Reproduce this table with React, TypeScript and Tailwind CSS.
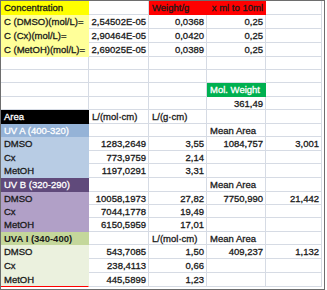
import React from "react";

type CellDef = {
  t?: string;
  right?: boolean;
  fill?: string;
  bold?: boolean;
};

const W = ["w-[88px]", "w-[60px]", "w-[58px]", "w-[59px]", "w-[56px]"];

const Y = "bg-[#ffff00] border-transparent text-[#1a1a1a]";
const PY = "bg-[#ffff99] border-transparent text-[#1a1a1a]";
const RED = "bg-[#ff0000] border-transparent text-[#1a1a1a]";
const GREEN = "bg-[#00b050] border-transparent text-white";
const BLACK = "bg-black border-transparent text-white";
const BLUEH = "bg-[#95b3d7] border-transparent text-white";
const BLUE = "bg-[#b8cce4] border-transparent text-[#1a1a1a]";
const PURH = "bg-[#604a7b] border-transparent text-white";
const PUR = "bg-[#b1a0c7] border-transparent text-[#1a1a1a]";
const GRH = "bg-[#c4d79b] border-transparent text-[#1a1a1a]";
const GR = "bg-[#ebf1de] border-transparent text-[#1a1a1a]";
const GRLAST = "bg-[#ebf1de] border-transparent border-b-[#ff0000] text-[#1a1a1a]";

const e: CellDef = {};

const rows: { h: string; cells: CellDef[] }[] = [
  { h: "h-[14px]", cells: [{ t: "Concentration", fill: Y }, e, { t: "Weight/g", fill: RED }, { t: "x ml to 10ml", fill: RED, right: true }, e] },
  { h: "h-[14px]", cells: [{ t: "C (DMSO)(mol/L)=", fill: PY }, { t: "2,54502E-05", right: true }, { t: "0,0368", right: true }, { t: "0,25", right: true }, e] },
  { h: "h-[14px]", cells: [{ t: "C (Cx)(mol/L)=", fill: PY }, { t: "2,90464E-05", right: true }, { t: "0,0420", right: true }, { t: "0,25", right: true }, e] },
  { h: "h-[14px]", cells: [{ t: "C (MetOH)(mol/L)=", fill: PY }, { t: "2,69025E-05", right: true }, { t: "0,0389", right: true }, { t: "0,25", right: true }, e] },
  { h: "h-[13px]", cells: [e, e, e, e, e] },
  { h: "h-[13px]", cells: [e, e, e, e, e] },
  { h: "h-[14px]", cells: [e, e, e, { t: "Mol. Weight", fill: GREEN }, e] },
  { h: "h-[13px]", cells: [e, e, e, { t: "361,49", right: true }, e] },
  { h: "h-[14px]", cells: [{ t: "Area", fill: BLACK }, { t: "L/(mol·cm)" }, { t: "L/(g·cm)" }, e, e] },
  { h: "h-[13px]", cells: [{ t: "UV A (400-320)", fill: BLUEH }, e, e, { t: "Mean Area" }, e] },
  { h: "h-[14px]", cells: [{ t: "DMSO", fill: BLUE }, { t: "1283,2649", right: true }, { t: "3,55", right: true }, { t: "1084,757", right: true }, { t: "3,001", right: true }] },
  { h: "h-[13px]", cells: [{ t: "Cx", fill: BLUE }, { t: "773,9759", right: true }, { t: "2,14", right: true }, e, e] },
  { h: "h-[14px]", cells: [{ t: "MetOH", fill: BLUE }, { t: "1197,0291", right: true }, { t: "3,31", right: true }, e, e] },
  { h: "h-[14px]", cells: [{ t: "UV B (320-290)", fill: PURH }, e, e, { t: "Mean Area" }, e] },
  { h: "h-[13px]", cells: [{ t: "DMSO", fill: PUR }, { t: "10058,1973", right: true }, { t: "27,82", right: true }, { t: "7750,990", right: true }, { t: "21,442", right: true }] },
  { h: "h-[13px]", cells: [{ t: "Cx", fill: PUR }, { t: "7044,1778", right: true }, { t: "19,49", right: true }, e, e] },
  { h: "h-[14px]", cells: [{ t: "MetOH", fill: PUR }, { t: "6150,5959", right: true }, { t: "17,01", right: true }, e, e] },
  { h: "h-[13px]", cells: [{ t: "UVA I (340-400)", fill: GRH, bold: true }, e, { t: "L/(mol·cm)" }, { t: "Mean Area" }, e] },
  { h: "h-[14px]", cells: [{ t: "DMSO", fill: GR }, { t: "543,7085", right: true }, { t: "1,50", right: true }, { t: "409,237", right: true }, { t: "1,132", right: true }] },
  { h: "h-[14px]", cells: [{ t: "Cx", fill: GR }, { t: "238,4113", right: true }, { t: "0,66", right: true }, e, e] },
  { h: "h-[14px]", cells: [{ t: "MetOH", fill: GRLAST }, { t: "445,5899", right: true }, { t: "1,23", right: true }, e, e] },
];

function Cell({ c, i }: { c: CellDef; i: number }) {
  const base = c.fill ? c.fill : "border-[#d6dbe4] text-[#1a1a1a]";
  return (
    <div
      className={`${W[i]} shrink-0 h-full border-r border-b ${base} flex items-center pt-px overflow-visible whitespace-nowrap ${
        c.right ? "justify-end pr-[2px]" : "justify-start pl-[3px]"
      } ${c.bold ? "font-bold" : "[-webkit-text-stroke:0.3px_currentColor]"}`}
    >
      {c.t}
    </div>
  );
}

export default function App() {
  return (
    <div className="w-[327px] h-[290px] bg-white overflow-hidden">
      <div
        className="w-[325px] h-[290px] border border-[#6e6e6e] bg-white overflow-hidden text-[9.5px] leading-none"
        style={{ fontFamily: '"Liberation Sans", Arial, sans-serif' }}
      >
        {rows.map((r, ri) => (
          <div key={ri} className={`flex ${r.h}`}>
            {r.cells.map((c, ci) => (
              <Cell key={ci} c={c} i={ci} />
            ))}
          </div>
        ))}
      </div>
    </div>
  );
}
